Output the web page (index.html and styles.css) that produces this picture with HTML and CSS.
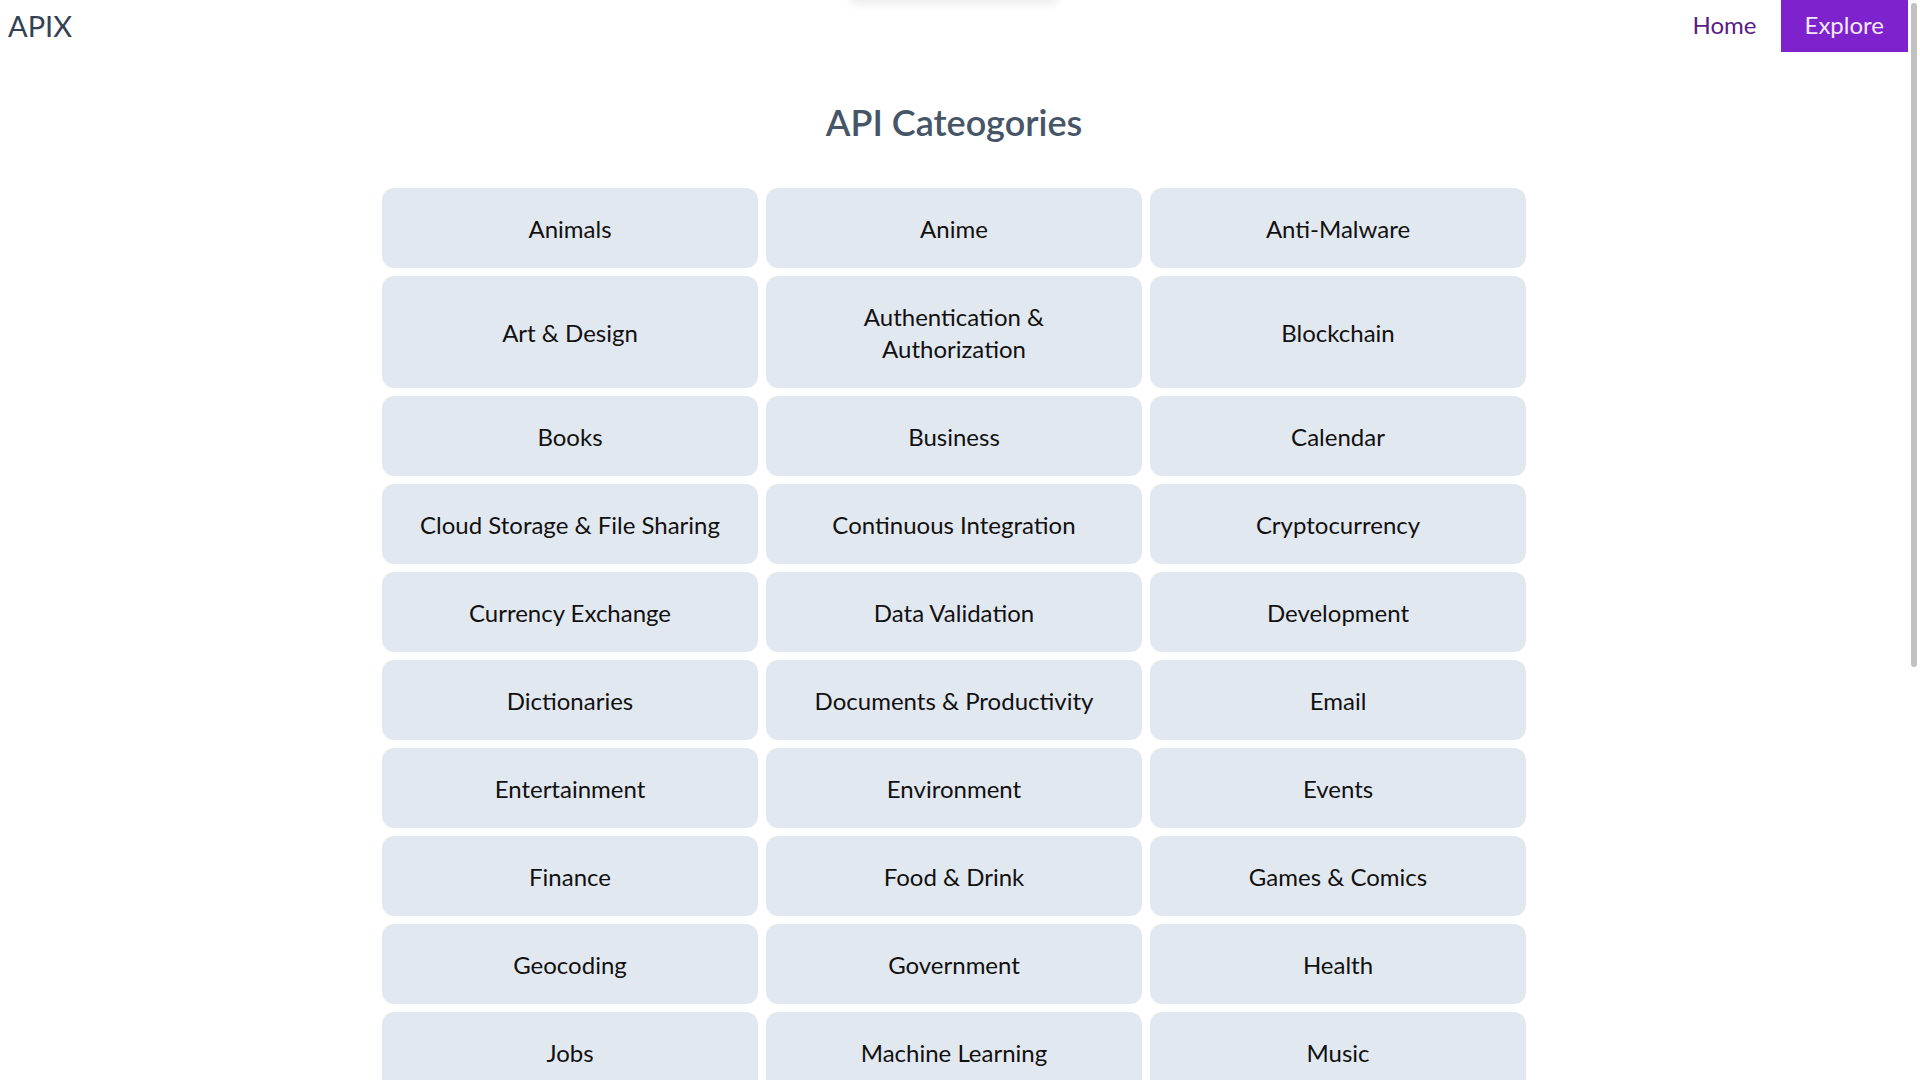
FILE: index.html
```html
<!DOCTYPE html>
<html lang="en">
<head>
<meta charset="utf-8">
<title>APIX - API Categories</title>
<link rel="stylesheet" href="styles.css">
</head>
<body>
<div class="toast-shadow"></div>
<div class="scroll-track"><div class="scroll-thumb"></div></div>
<header class="nav">
  <a class="brand" href="#">APIX</a>
  <nav class="nav-links">
    <a class="nav-link" href="#">Home</a>
    <a class="nav-link active" href="#">Explore</a>
  </nav>
</header>
<main class="page">
  <h1 class="title">API Cateogories</h1>
  <div class="grid">
    <a class="card" href="#">Animals</a>
    <a class="card" href="#">Anime</a>
    <a class="card" href="#">Anti-Malware</a>
    <a class="card" href="#">Art &amp; Design</a>
    <a class="card" href="#">Authentication &amp; Authorization</a>
    <a class="card" href="#">Blockchain</a>
    <a class="card" href="#">Books</a>
    <a class="card" href="#">Business</a>
    <a class="card" href="#">Calendar</a>
    <a class="card" href="#">Cloud Storage &amp; File Sharing</a>
    <a class="card" href="#">Continuous Integration</a>
    <a class="card" href="#">Cryptocurrency</a>
    <a class="card" href="#">Currency Exchange</a>
    <a class="card" href="#">Data Validation</a>
    <a class="card" href="#">Development</a>
    <a class="card" href="#">Dictionaries</a>
    <a class="card" href="#">Documents &amp; Productivity</a>
    <a class="card" href="#">Email</a>
    <a class="card" href="#">Entertainment</a>
    <a class="card" href="#">Environment</a>
    <a class="card" href="#">Events</a>
    <a class="card" href="#">Finance</a>
    <a class="card" href="#">Food &amp; Drink</a>
    <a class="card" href="#">Games &amp; Comics</a>
    <a class="card" href="#">Geocoding</a>
    <a class="card" href="#">Government</a>
    <a class="card" href="#">Health</a>
    <a class="card" href="#">Jobs</a>
    <a class="card" href="#">Machine Learning</a>
    <a class="card" href="#">Music</a>
    <a class="card" href="#">News</a>
    <a class="card" href="#">Open Data</a>
    <a class="card" href="#">Open Source Projects</a>
    <a class="card" href="#">Patent</a>
    <a class="card" href="#">Personality</a>
    <a class="card" href="#">Phone</a>
    <a class="card" href="#">Photography</a>
    <a class="card" href="#">Programming</a>
    <a class="card" href="#">Science &amp; Math</a>
    <a class="card" href="#">Security</a>
    <a class="card" href="#">Shopping</a>
    <a class="card" href="#">Social</a>
    <a class="card" href="#">Sports &amp; Fitness</a>
    <a class="card" href="#">Test Data</a>
    <a class="card" href="#">Text Analysis</a>
    <a class="card" href="#">Tracking</a>
    <a class="card" href="#">Transportation</a>
    <a class="card" href="#">URL Shorteners</a>
    <a class="card" href="#">Vehicle</a>
    <a class="card" href="#">Video</a>
    <a class="card" href="#">Weather</a>
  </div>
</main>
</body>
</html>
```
FILE: styles.css
```css
* {
  box-sizing: border-box;
}

html, body {
  margin: 0;
  padding: 0;
  background: #ffffff;
}

body {
  font-family: "Lato", "Noto Sans", "Liberation Sans", sans-serif;
  color: #111111;
  padding-right: 12px;
}

a {
  text-decoration: none;
  color: inherit;
}

.toast-shadow {
  position: absolute;
  top: -48px;
  left: 50%;
  width: 210px;
  height: 48px;
  margin-left: -111px;
  background: #ffffff;
  border-radius: 8px;
  box-shadow: 0 4px 10px rgba(0, 0, 0, 0.08);
}

.scroll-track {
  position: fixed;
  top: 0;
  right: 0;
  width: 12px;
  height: 100vh;
  background: #ffffff;
  z-index: 10;
}

.scroll-thumb {
  margin: 3px 0 0 3px;
  width: 6px;
  height: 664px;
  border-radius: 3px;
  background: #c1c1c1;
}

.nav {
  display: flex;
  justify-content: space-between;
  align-items: flex-start;
  padding: 0 0 0 8px;
}

.brand {
  font-size: 29px;
  line-height: 36px;
  padding-top: 8px;
  color: #334155;
}

.nav-links {
  display: flex;
}

.nav-link {
  display: block;
  font-size: 24px;
  line-height: 32px;
  padding: 9px 24px 11px;
  color: #581c87;
}

.nav-link.active {
  background: #7e22ce;
  color: #f3e8ff;
}

.page {
  padding-bottom: 48px;
}

.title {
  margin: 50px 0 46px;
  text-align: center;
  font-size: 36px;
  line-height: 40px;
  font-weight: 600;
  color: #475569;
}

.grid {
  width: 1144px;
  margin: 0 auto;
  display: grid;
  grid-template-columns: repeat(3, 1fr);
  gap: 8px;
}

.card {
  display: flex;
  align-items: center;
  justify-content: center;
  text-align: center;
  padding: 25px 24px 23px;
  background: #e2e8f0;
  border-radius: 12px;
  font-size: 24px;
  line-height: 32px;
  color: #111111;
}
```
